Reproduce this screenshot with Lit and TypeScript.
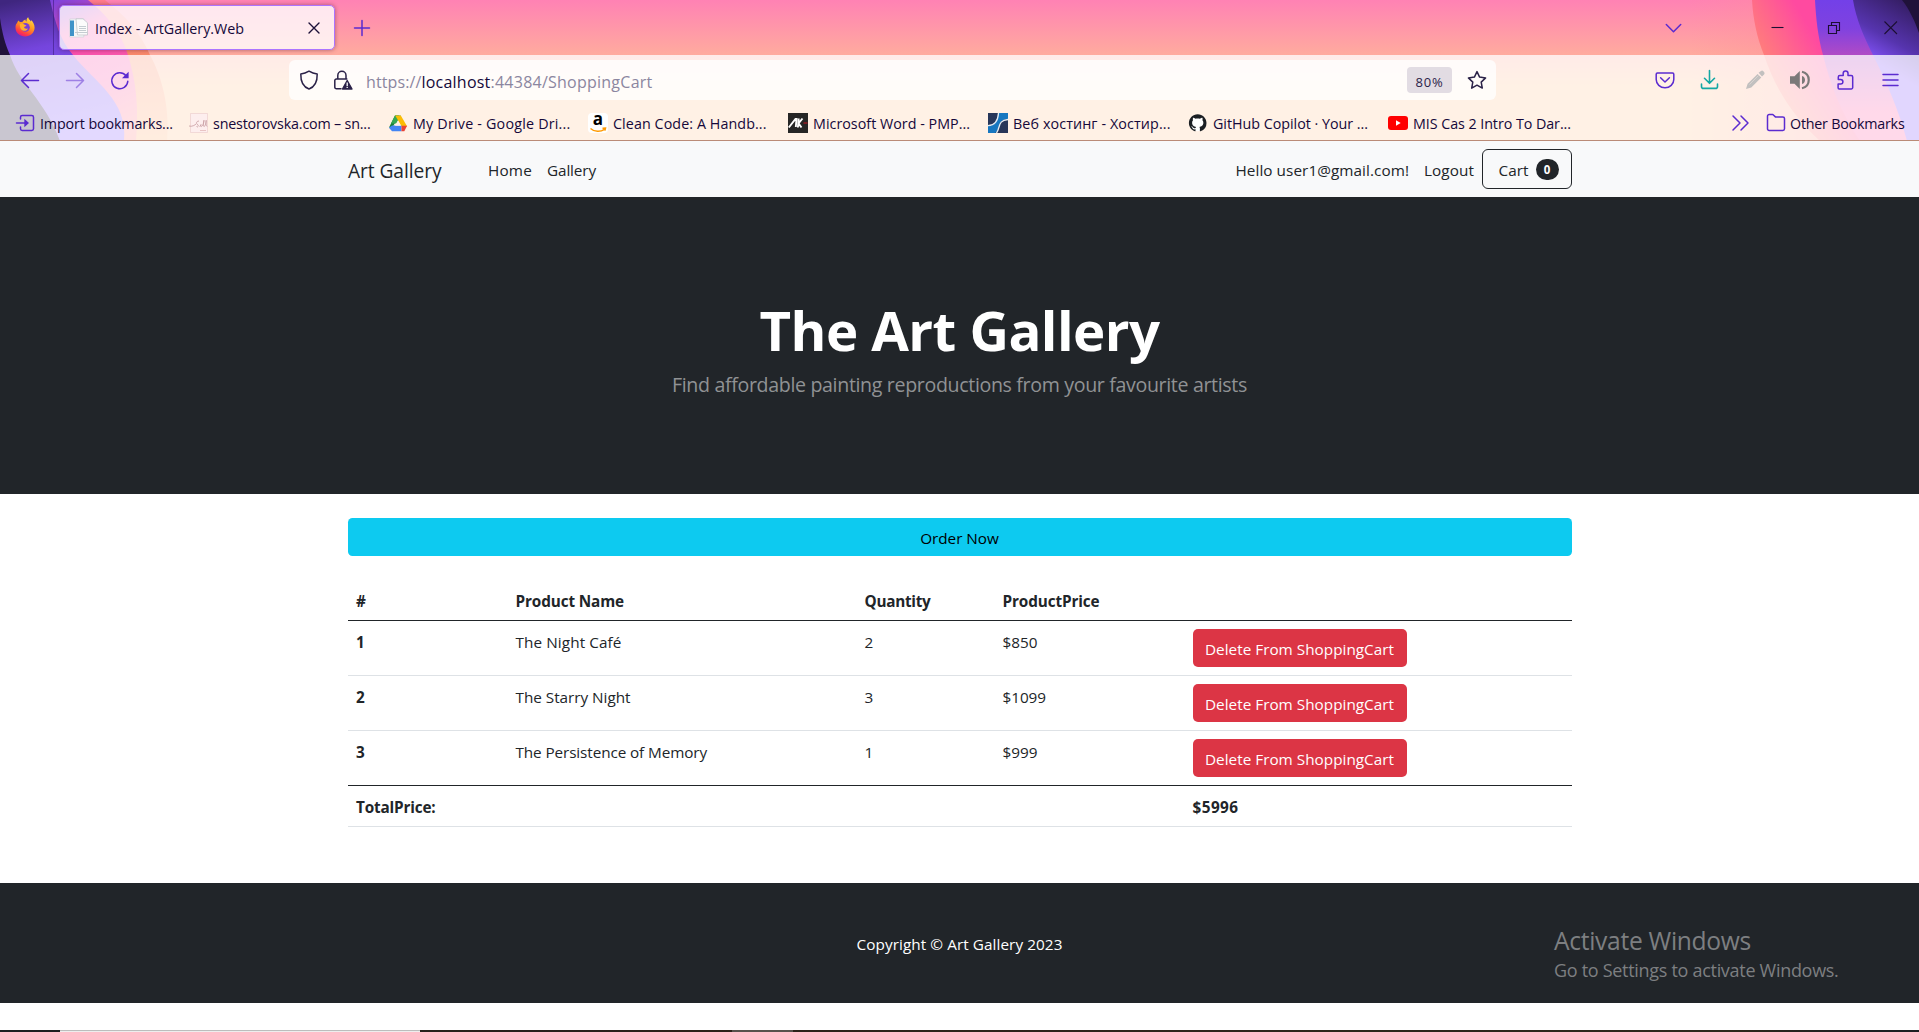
import { LitElement, html, css, svg } from "lit";
import { customElement, property } from "lit/decorators.js";

/** One line of text whose tracking is adjusted so that it spans a given width. */
@customElement("fit-text")
class FitText extends LitElement {
  @property() text = "";
  @property({ type: Number }) w = 0;

  static styles = css`
    :host { display: inline-block; white-space: pre; flex: none; }
  `;

  render() {
    return html`<span>${this.text}</span>`;
  }

  updated() {
    this.style.width = this.w + "px";
    const fit = () => {
      const span = this.renderRoot.querySelector("span") as HTMLElement;
      span.style.letterSpacing = "0px";
      const natural = span.getBoundingClientRect().width;
      span.style.letterSpacing = (this.w - natural) / this.text.length + "px";
    };
    fit();
    document.fonts.ready.then(fit);
  }
}

const t = (text: string, w: number, cls = "") =>
  html`<fit-text class=${cls} .text=${text} .w=${w}></fit-text>`;

const icon = (body: unknown, cls = "") =>
  html`<svg class="icon ${cls}" viewBox="0 0 20 20" width="20" height="20">${body}</svg>`;

const icons = {
  firefox: svg`
    <defs>
      <linearGradient id="fx" x1="0.8" y1="0" x2="0.3" y2="1">
        <stop offset="0" stop-color="#ffe14a"/><stop offset=".45" stop-color="#ff9a1f"/>
        <stop offset=".8" stop-color="#ff3d45"/><stop offset="1" stop-color="#e31587"/>
      </linearGradient>
    </defs>
    <path fill="url(#fx)" d="M3.6 3.4 5 5.2c.8-.2 1.500 0 2.200.1C8 4 9.200 3 10.400 2.600c0 1 .6 1.600 1.200 2C11.300 2.800 11.800 1.300 13.200.3c.3 1.800 1.600 2.700 2.700 4.100.3-.3.2-.9 0-1.400 2 1.500 3.700 4.400 3.700 7.500 0 5.200-4.200 9-9.500 9S.5 15.800.5 10.500c0-1.800.4-3.200 1.200-4.500 0 .5.100.8.200 1.100C2.100 5.600 2.600 4.300 3.600 3.400z"/>
    <circle cx="10.400" cy="10.300" r="4.400" fill="#7a3fd6"/>
    <path fill="#ffb02e" d="M4.800 7.200c1.600-1 3.400-.7 4.400.3.7.6 1.700.6 2.200.7-.2 1.200-2 1.400-2.300 1.900.1 1.700 2.300 2.200 4 1.100-.8 2.300-3.400 3.200-5.500 2.200C5.500 12.300 4.800 9.800 4.800 7.200z"/>`,
  page: svg`
    <path fill="#f4f7f8" stroke="#c9ced3" stroke-width=".6" d="M.8 1h14v18H.8z"/>
    <path fill="#3f93c8" d="M1 2.500h4v15.500H1z"/>
    <path fill="#fbfbfb" stroke="#b9bfc4" stroke-width=".7" d="M7 .8h7l4.500 4V17H8.500z"/>
    <path stroke="#c4ccd1" stroke-width="1" d="M10 8.500h7M10 10.500h7M10 12.500h7M6 14.500h12"/>`,
  close: svg`<path class="ink" d="m5 5 10 10M15 5 5 15"/>`,
  plus: svg`<path class="accent" d="M10 2.500v15M2.500 10h15"/>`,
  back: svg`<path class="accent" d="M18.500 10.500H1.500M8.500 3.500l-7 7 7 7"/>`,
  forward: svg`<path class="accent" d="M1.500 10.500h17M11.500 3.500l7 7-7 7"/>`,
  reload: svg`<path class="accent" d="M17.800 11.300A8 8 0 1 1 16 5.700"/><path fill="#5b2bd0" d="M18.600 1.700v6.600H12z"/>`,
  shield: svg`<path class="url" d="M10 1.200c2.600 1.600 5.300 2.500 8.200 2.800C18.400 11.600 16 16.800 10 19 4 16.800 1.600 11.600 1.800 4 4.700 3.700 7.400 2.800 10 1.200z"/>`,
  lock: svg`
    <path class="url" d="M4.800 9V5.400a4.100 4.100 0 0 1 8.200 0V9M8 18.800H3.400a1.600 1.600 0 0 1-1.600-1.600V10.600A1.600 1.600 0 0 1 3.400 9h10.400"/>
    <path fill="#2b2248" stroke="#2b2248" stroke-width="1.400" stroke-linejoin="round" d="M14.200 10.600 19 19H9.500z"/>
    <path stroke="#fff" stroke-width="1.300" d="M14.200 12.600v3.300M14.200 16.800v1.200"/>`,
  star: svg`<path class="url" d="m10 1.600 2.600 5.500 6 .8-4.400 4.200 1.100 6L10 15.200l-5.300 2.900 1.100-6L1.400 7.900l6-.8z"/>`,
  pocket: svg`<path class="accent" d="M2.400 3h15.200a1.200 1.200 0 0 1 1.200 1.200v5.300a8.800 8.300 0 0 1-17.600 0V4.200A1.200 1.200 0 0 1 2.400 3z"/><path class="accent" d="m5.600 7.800 4.400 4.200 4.400-4.200"/>`,
  download: svg`<path class="teal" d="M9.500 .5v12.500M4.500 8.300l5 5 5-5M1.500 14v2.400a2 2 0 0 0 2 2h12a2 2 0 0 0 2-2V14"/>`,
  pencil: svg`<path fill="#c2c0bf" d="M13.600 2.800 16 1a1.700 1.700 0 0 1 2.300.2l.8.900a1.700 1.700 0 0 1 0 2.300L17 6.600zM12.600 3.900l3.700 3.700L6.300 17.500 1 19l1.600-5.200z"/><path stroke="#ddd8d4" stroke-width=".8" d="m4.500 14.500 9-9"/>`,
  speaker: svg`
    <path fill="#7b7979" d="M0 6.300h4.500L9.800 1v18l-5.300-5.300H0z"/>
    <path fill="#7b7979" d="M12 6c4 1 4 7 0 8z"/>
    <path fill="none" stroke="#7b7979" stroke-width="2.200" d="M12 1.800c9 2 9 14.400 0 16.400"/>`,
  puzzle: svg`<path class="accent" d="M4.200 18.900h12a1.500 1.500 0 0 0 1.500-1.500V7a1.500 1.500 0 0 0-1.500-1.500h-3.200V3.300a2.400 2.400 0 0 0-4.800 0v2.200H4.800a1.500 1.500 0 0 0-1.500 1.500v2.400h2.300a2.200 2.200 0 0 1 0 4.600H3.100v3.800c0 .6.400 1.100 1.100 1.100z"/>`,
  menu: svg`<path class="accent" d="M3 4.500h15M3 10h15M3 15.500h15"/>`,
  chevron: svg`<path class="accent" d="m3.300 6.500 7.200 7.200 7.200-7.200"/>`,
  minimize: svg`<path class="win" d="M4.500 9.500h12"/>`,
  restore: svg`<path class="win" d="M4.500 7.500h8v8h-8zM7.500 7.500v-3h8v8h-3"/>`,
  winClose: svg`<path class="win" d="m3.500 3.500 12.500 12.500M16 3.500 3.500 16"/>`,
  import: svg`<path class="accent" d="M6.500 6V4.200A1.700 1.700 0 0 1 8.200 2.500h9.600a1.700 1.700 0 0 1 1.700 1.700v11.600a1.700 1.700 0 0 1-1.700 1.700H8.200a1.700 1.700 0 0 1-1.700-1.700V14M2.500 10h10"/><path fill="#5b2bd0" d="M10.300 5.700 15 10l-4.700 4.300z"/>`,
  sketch: svg`<path fill="#fdeeee" stroke="#eccfcf" stroke-width=".7" d="M2.500.5h17v19h-17z"/><path fill="none" stroke="#c79aa0" stroke-width=".8" d="M1 13c3 1 6-1 7-2m3-3c-3 0-3 3-1.500 3.500S10 15 8.500 13.500M11.500 13.500c1.500-.5 2-2 1.500-2s-1 2 .3 2 2.700-4 2.700-6-1.300 6 0 6 2.200-4.500 2.200-6-.6 5 .8 6"/><path stroke="#e3b9b9" stroke-width=".8" d="M12 17.500h6"/>`,
  drive: svg`
    <path fill="#188038" d="M1 14.600 7 2.500h4L8.500 7.600 4 15z"/>
    <path fill="#34a853" d="M7 2.500h5.800l-4.500 8H3z"/>
    <path fill="#fbbc04" d="M7.200 2.500h5.600l6.400 11h-5.600z"/>
    <path fill="#4285f4" d="m4 12.600h9.500v5.600H4L1 14.800z"/>
    <path fill="#ea4335" d="M13.500 12.800h5.600l-2.800 5.400h-2.800z"/>
    <path fill="#fff1e5" d="m10 7.600 3 5.200H7z"/>`,
  ak: svg`
    <path fill="#262626" d="M0 0h20v20H0z"/>
    <path fill="none" stroke="#fff" stroke-width="1.900" d="M.8 14.500 7.500 6h1L7.800 14M10.700 5.500 9.900 14.500M14.500 5.500l-4 4.800 3 4.200"/>
    <path stroke="#8e1b23" stroke-width="1.600" d="M15.500 10h4"/>`,
  hosting: svg`
    <path fill="#273659" d="M0 0h20v20H0z"/>
    <path fill="#1777c0" d="M10.500 0H20v6c-6 0-8 3-9 7-1 4-3 7-4 7H0v-7c6 0 9-4 10.500-13z"/>
    <path fill="none" stroke="#e6edf4" stroke-width="1.300" d="M10.500 0C10 8 6 12.500 0 12.700M20 6.500c-7 .5-8 4-9 7.500-.8 3-1.500 4.500-2.500 6"/>`,
  github: svg`<g transform="translate(.9 1.200) scale(1.100)"><circle cx="8" cy="8" r="7.500" fill="#fff"/><path fill="#1b1f23" d="M8 0C3.580 0 0 3.580 0 8c0 3.540 2.290 6.530 5.470 7.590.4.070.55-.17.55-.38 0-.19-.01-.82-.01-1.490-2.010.37-2.530-.49-2.690-.94-.09-.23-.48-.94-.82-1.130-.28-.15-.68-.52-.01-.53.63-.01 1.080.58 1.230.82.72 1.210 1.870.87 2.330.66.070-.52.28-.87.51-1.070-1.780-.2-3.640-.89-3.640-3.950 0-.87.31-1.590.82-2.150-.08-.2-.36-1.020.08-2.120 0 0 .67-.21 2.200.82.64-.18 1.320-.27 2-.27s1.360.09 2 .27c1.530-1.040 2.200-.82 2.200-.82.44 1.100.16 1.920.08 2.120.51.56.82 1.270.82 2.150 0 3.070-1.870 3.750-3.650 3.950.29.25.54.73.54 1.480 0 1.070-.01 1.930-.01 2.200 0 .21.15.46.55.38A8.010 8.010 0 0 0 16 8c0-4.420-3.580-8-8-8z"/></g>`,
  youtube: svg`<rect y="3" width="20" height="14" rx="3" fill="#f00"/><path fill="#fff" d="M8 7.200v5.600l4.700-2.800z"/>`,
  more: svg`<path class="accent" d="m3 3 7 7-7 7M11 3l7 7-7 7"/>`,
  folder: svg`<path class="accent" d="M1.500 15.800V3.200A1.700 1.700 0 0 1 3.200 1.500h3.600l2.600 2.400h7.400a1.700 1.700 0 0 1 1.700 1.700v10.200a1.700 1.700 0 0 1-1.700 1.700H3.200a1.700 1.700 0 0 1-1.700-1.700z"/>`,
};

const amazon = html`<span class="amazon"><b>a</b><svg viewBox="0 0 20 6" width="20" height="6">
  <path fill="none" stroke="#ff9900" stroke-width="1.500" d="M2.500 1.500c4 3.600 10 3.600 14 .8M14.500 1.200l3-.2-.6 2.600"/></svg></span>`;

const bookmarks = [
  { icon: icon(icons.sketch), text: "snestorovska.com – sn...", w: 157.5 },
  { icon: icon(icons.drive), text: "My Drive - Google Dri...", w: 157.5 },
  { icon: amazon, text: "Clean Code: A Handb...", w: 153.5 },
  { icon: icon(icons.ak), text: "Microsoft Word - PMP...", w: 157 },
  { icon: icon(icons.hosting), text: "Веб хостинг - Хостир...", w: 157.5 },
  { icon: icon(icons.github), text: "GitHub Copilot · Your ...", w: 155 },
  { icon: icon(icons.youtube), text: "MIS Cas 2 Intro To Dar...", w: 158 },
];

const items = [
  { name: "The Night Café", nameW: 106, qty: "2", price: "$850", priceW: 35 },
  { name: "The Starry Night", nameW: 115, qty: "3", price: "$1099", priceW: 43.5 },
  { name: "The Persistence of Memory", nameW: 191.5, qty: "1", price: "$999", priceW: 35 },
];

const themeArt = html`<svg class="art" viewBox="0 0 1919 141" width="1919" height="141">
  <defs>
    <linearGradient id="sky" x1="0" y1="0" x2="0" y2="1">
      <stop offset="0" stop-color="#ff82b4"/><stop offset=".39" stop-color="#ffab9e"/>
      <stop offset=".6" stop-color="#ffc393"/><stop offset="1" stop-color="#ffc393"/>
    </linearGradient>
    <linearGradient id="peach" x1="0" y1="0" x2="0" y2="1">
      <stop offset="0" stop-color="#ff7a8c"/><stop offset=".4" stop-color="#f98a6a"/><stop offset="1" stop-color="#ffb57a"/>
    </linearGradient>
    <linearGradient id="hotL" gradientUnits="userSpaceOnUse" x1="52" y1="0" x2="115" y2="141">
      <stop offset="0" stop-color="#7c42dc"/><stop offset=".12" stop-color="#a548d0"/>
      <stop offset=".25" stop-color="#f94bac"/><stop offset=".6" stop-color="#f95cae"/><stop offset="1" stop-color="#ff8c8c"/>
    </linearGradient>
    <linearGradient id="violetL" gradientUnits="userSpaceOnUse" x1="20" y1="0" x2="50" y2="141">
      <stop offset="0" stop-color="#3f267f"/><stop offset=".35" stop-color="#7545dd"/><stop offset="1" stop-color="#8a62ff"/>
    </linearGradient>
    <linearGradient id="hotR" gradientUnits="userSpaceOnUse" x1="1755" y1="50" x2="1805" y2="20">
      <stop offset="0" stop-color="#ff8278"/><stop offset="1" stop-color="#ff4aa0"/>
    </linearGradient>
    <linearGradient id="violetR" x1="0" y1="0" x2="0" y2="1">
      <stop offset="0" stop-color="#7340e8"/><stop offset=".2" stop-color="#7f42e0"/><stop offset=".39" stop-color="#b04ac6"/>
      <stop offset=".8" stop-color="#ff5fa6"/><stop offset="1" stop-color="#ff5fa6"/>
    </linearGradient>
    <linearGradient id="nightR" gradientUnits="userSpaceOnUse" x1="1905" y1="0" x2="1870" y2="60">
      <stop offset="0" stop-color="#341d62"/><stop offset=".6" stop-color="#5634ae"/><stop offset="1" stop-color="#8454fb"/>
    </linearGradient>
    <linearGradient id="fadeR" x1="0" y1="0" x2="1" y2="0">
      <stop offset="0" stop-color="#ff8f98" stop-opacity="0"/><stop offset="1" stop-color="#ff8f98" stop-opacity=".7"/>
    </linearGradient>
  </defs>
  <rect width="1919" height="141" fill="url(#sky)"/>
  <rect x="1690" width="150" height="141" fill="url(#fadeR)"/>
  <path fill="url(#peach)" d="M0 0h105c22 17 36 34 45 55 12 22 20 52 17 86H0z"/>
  <path fill="url(#hotL)" d="M0 0h88c18 14 33 32 40 55 8 26 11 52 8 86H0z"/>
  <path fill="url(#violetL)" d="M0 0h50c5 22 10 40 23 55 22 28 55 45 51 86H0z"/>
  <path fill="#20123a" d="M0 18c2 14 5 26 10 37 9 29 35 45 50 86H0z"/>
  <path fill="url(#hotR)" d="M1752 0c1 19 5 38 12 55 11 33 28 60 56 86h99V0z"/>
  <path fill="url(#violetR)" d="M1815 0c1 19 3 37 8 55 7 28 18 59 37 86h59V0z"/>
  <path fill="url(#nightR)" d="M1853 0c3 19 11 37 20 55 14 28 26 56 34 86h12V0z"/>
  <path fill="#20123a" d="M1902 0c8 10 13 22 17 33V0z"/>
</svg>`;

@customElement("app-root")
class AppRoot extends LitElement {
  static styles = css`
    :host {
      display: flex; flex-direction: column; width: 1919px; height: 1032px; overflow: hidden;
      position: relative; background: #fff; color: #212529;
      font: 15.3px/24px "Open Sans", "Noto Sans", sans-serif;
    }
    * { box-sizing: border-box; }
    .icon { display: block; flex: none; overflow: visible; }
    .accent, .url, .ink, .win, .teal { fill: none; stroke-width: 1.5; stroke-linecap: round; stroke-linejoin: round; }
    .accent { stroke: #5b2bd0; }
    .url { stroke: #2b2248; }
    .ink { stroke: #1c1038; stroke-width: 1.4; }
    .win { stroke: #1c0f33; stroke-width: 1.1; stroke-linecap: butt; stroke-linejoin: miter; }
    .teal { stroke: #14a7a4; stroke-width: 1.6; }
    .dim { opacity: .5; }

    .browser { display: grid; height: 141px; flex: none; font-size: 14.3px; line-height: 20px; color: #15083a; }
    .browser fit-text { padding-top: 2px; }
    .art, .chrome { grid-area: 1 / 1; display: block; }
    .chrome { z-index: 1; display: flex; flex-direction: column; }
    .strip { display: flex; align-items: center; height: 55px; }
    .pin { width: 54px; height: 55px; padding: 17px 0 0 15px; border-right: 1px solid rgba(50,20,110,.5); }
    .tab {
      display: flex; align-items: center; width: 276px; height: 45px; margin-left: 5px; padding-left: 9px;
      border: 1px solid #ac74ff; border-radius: 5px; background: rgba(255,255,255,.8);
      box-shadow: 0 0 4px rgba(60,10,40,.45);
    }
    .tab .label { margin-left: 6px; }
    .tab .x { margin-left: 60px; }
    .new { margin-left: 16.500px; }
    .chev { margin-left: 1291.500px; }
    .min { margin-left: 84px; }
    .res, .cls { margin-left: 37px; }

    .panel { background: rgba(255,255,255,.76); border-bottom: 1px solid #ba8b77; height: 86px; }
    .tools { display: flex; align-items: center; height: 50px; padding: 0 19px 0 20px; }
    .set { display: flex; gap: 25px; }
    .address {
      display: flex; align-items: center; width: 1207px; height: 40px; margin: 0 159px; padding: 0 9px 0 10px;
      border-radius: 6px; background: rgba(255,255,255,.78); font-size: 16px; color: #8b86a0;
    }
    .address fit-text { padding-top: 3px; }
    .address .lock { margin: 0 13px 0 14px; }
    .host { color: #15083a; }
    .grow { flex: 1; }
    .zoom {
      width: 45px; height: 26px; padding: 2px 0 0 8.500px; margin-right: 15px; border-radius: 4px;
      background: #e2dce3; color: #2b2248; font-size: 13px;
    }
    .marks { display: flex; align-items: center; height: 35px; padding-left: 14px; }
    .mark { display: flex; align-items: center; gap: 5px; width: 200px; }
    .mark.first { width: 174px; gap: 6px; }
    .overflow { margin-left: 142px; }
    .other { display: flex; align-items: center; gap: 4px; margin-left: 16px; }
    .amazon {
      display: flex; flex-direction: column; align-items: center; width: 20px; height: 20px; border-radius: 4px;
      background: #fff; color: #000; font-size: 17px; line-height: 12px;
    }
    .amazon b { height: 14px; }

    .navbar { flex: none; height: 56px; background: #f8f9fa; padding: 0 347.500px; display: flex; align-items: center; }
    .navbar fit-text { padding-top: 2px; }
    .navbar .brand { font-size: 19.2px; margin-right: 47px; padding: 3px 0 0 .5px; }
    .gap { margin-right: 15px; }
    .logout { margin-right: 7.500px; }
    .cart {
      display: flex; align-items: center; gap: 7px; width: 90px; height: 40px; padding-left: 16px;
      border: 1px solid #212529; border-radius: 6px;
    }
    .count {
      width: 23px; height: 21px; border-radius: 11px; background: #212529; color: #fff;
      font-size: 11.500px; font-weight: 700; line-height: 21px; text-align: center;
    }

    .hero {
      flex: none; height: 297px; background: #212529; color: #fff; padding-top: 100px;
      display: flex; flex-direction: column; align-items: center;
    }
    .title { font-size: 54.600px; font-weight: 700; line-height: 67px; }
    .lead { font-size: 19.600px; line-height: 30px; margin-top: 6px; color: #909294; }

    .content { flex: none; width: 1224px; height: 389px; margin-left: 347.500px; padding-top: 24px; }
    .order {
      display: flex; justify-content: center; align-items: center; height: 38px; margin-bottom: 24px;
      background: #0dcaf0; color: #000; border-radius: 4.500px; padding-top: 2px;
    }
    .row {
      display: grid; grid-template-columns: 159.500px 349px 138px 190px 1fr; height: 55px; padding: 8px 0 0 8.500px;
      border-bottom: 1px solid #dee2e6; align-items: start;
    }
    .dark { border-bottom-color: #212529; }
    .row b, .bold { font-weight: 700; }
    .bold { height: 41px; }
    .row > fit-text, .row > b, .row > span { padding-top: 1px; }
    .delete {
      display: flex; align-items: center; justify-content: center; width: 214px; height: 38px;
      padding-top: 2px; border-radius: 5px; background: #dc3545; color: #fff;
    }

    .footer {
      flex: none; height: 120px; background: #212529; color: #fff;
      display: flex; align-items: center; justify-content: center; padding-top: 1px;
    }
    .gutter { flex: none; height: 27px; }
    .taskbar { flex: none; display: flex; height: 2px; background: linear-gradient(90deg, #1d1f22, #2b2119 35%, #2e281b 90%, #1d1f22 97%); }
    .window { width: 360px; margin-left: 60px; background: #eee; border-top: 1px solid #bdbdbd; }
    .running { width: 61px; margin-left: 312px; background: #57514c; }
    .activate {
      position: absolute; left: 1554px; top: 923px; color: #7d7f81; font-size: 18px; line-height: 24px;
      display: flex; flex-direction: column;
    }
    .big { font-size: 24.600px; line-height: 35px; }
  `;

  render() {
    return html`
      <header class="browser">
        ${themeArt}
        <div class="chrome">
          <div class="strip">
            <div class="pin">${icon(icons.firefox)}</div>
            <div class="tab">
              ${icon(icons.page)}${t("Index - ArtGallery.Web", 149, "label")}${icon(icons.close, "x")}
            </div>
            ${icon(icons.plus, "new")}${icon(icons.chevron, "chev")}${icon(icons.minimize, "min")}
            ${icon(icons.restore, "res")}${icon(icons.winClose, "cls")}
          </div>
          <div class="panel">
            <div class="tools">
              <div class="set">${icon(icons.back)}${icon(icons.forward, "dim")}${icon(icons.reload)}</div>
              <div class="address">
                ${icon(icons.shield)}${icon(icons.lock, "lock")}
                ${t("https://", 55.5)}${t("localhost", 69, "host")}${t(":44384/ShoppingCart", 162)}
                <span class="grow"></span>
                <span class="zoom">${t("80%", 28)}</span>
                ${icon(icons.star)}
              </div>
              <div class="set">
                ${icon(icons.pocket)}${icon(icons.download)}${icon(icons.pencil)}${icon(icons.speaker)}${icon(icons.puzzle)}${icon(icons.menu)}
              </div>
            </div>
            <div class="marks">
              <div class="mark first">${icon(icons.import)}${t("Import bookmarks...", 133)}</div>
              ${bookmarks.map((b) => html`<div class="mark">${b.icon}${t(b.text, b.w)}</div>`)}
              ${icon(icons.more, "overflow")}
              <div class="other">${icon(icons.folder)}${t("Other Bookmarks", 114.5)}</div>
            </div>
          </div>
        </div>
      </header>

      <nav class="navbar">
        ${t("Art Gallery", 93.5, "brand")}${t("Home", 44, "gap")}${t("Gallery", 49)}
        <span class="grow"></span>
        ${t("Hello user1@gmail.com!", 173.5, "gap")}${t("Logout", 50, "logout")}
        <div class="cart">${t("Cart", 30)}<span class="count">0</span></div>
      </nav>

      <section class="hero">
        ${t("The Art Gallery", 400, "title")}
        ${t("Find affordable painting reproductions from your favourite artists", 575, "lead")}
      </section>

      <main class="content">
        <div class="order">${t("Order Now", 78.5)}</div>
        <div class="row dark bold">
          <span>#</span>${t("Product Name", 108.5)}${t("Quantity", 66)}${t("ProductPrice", 97)}
        </div>
        ${items.map((it, i) => html`
          <div class="row ${i === items.length - 1 ? "dark" : ""}">
            <b>${i + 1}</b>${t(it.name, it.nameW)}<span>${it.qty}</span>${t(it.price, it.priceW)}
            <div class="delete">${t("Delete From ShoppingCart", 189)}</div>
          </div>`)}
        <div class="row bold">
          ${t("TotalPrice:", 79.5)}<span></span><span></span><span></span>${t("$5996", 46)}
        </div>
      </main>

      <footer class="footer">${t("Copyright © Art Gallery 2023", 206)}</footer>
      <div class="gutter"></div>
      <div class="taskbar"><span class="window"></span><span class="running"></span></div>
      <div class="activate">
        ${t("Activate Windows", 197, "big")}${t("Go to Settings to activate Windows.", 284.5)}
      </div>
    `;
  }
}
